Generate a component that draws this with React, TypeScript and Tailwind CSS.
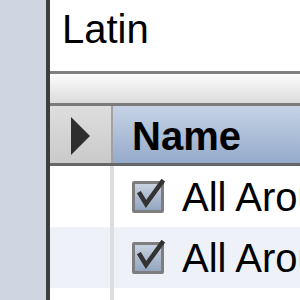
import React from "react";

type Row = { label: string; checked: boolean; stripe: boolean };

const rows: Row[] = [
  { label: "All Around", checked: true, stripe: false },
  { label: "All Around", checked: true, stripe: true },
];

function CheckBox({ checked }: { checked: boolean }) {
  return (
    <div className="relative h-[32px] w-[32px] shrink-0 rounded-[2px] border-[3px] border-[#7e7e7e] bg-gradient-to-b from-[#c8d2e1] to-[#93a5bf]">
      {checked && (
        <svg
          className="absolute left-[-3px] top-[-3px] overflow-visible"
          width="32"
          height="32"
          viewBox="0 0 32 32"
        >
          <polyline
            points="8,13 14,23 30,1"
            fill="none"
            stroke="#333"
            strokeWidth="4.5"
            strokeLinecap="square"
            strokeLinejoin="miter"
          />
        </svg>
      )}
    </div>
  );
}

export default function App() {
  return (
    <div className="flex h-[300px] w-[300px] overflow-hidden bg-white font-['Liberation_Sans',Arial,sans-serif] text-black">
      <div className="w-[46px] shrink-0 bg-[#d0d6e1]" />
      <div className="w-[4px] shrink-0 bg-[#3e3e3e]" />
      <div className="flex min-w-0 flex-1 flex-col">
        <div className="h-[71px] shrink-0 whitespace-nowrap pl-[12px] pt-[9px] text-[40px] leading-10">
          Latin
        </div>
        <div className="h-[3px] shrink-0 bg-[#808080]" />
        <div className="h-[29px] shrink-0 bg-gradient-to-b from-[#fcfcfc] to-[#dcdcdc]" />
        <div className="h-[3px] shrink-0 bg-[#7b7b7b]" />
        <div className="flex h-[57px] shrink-0">
          <div className="w-[61px] shrink-0 bg-gradient-to-b from-[#dedede] to-[#cacaca] pl-[21px] pt-[11px]">
            <svg width="19" height="38" viewBox="0 0 19 38">
              <polygon points="0,0 19,19 0,38" fill="#2e2e2e" />
            </svg>
          </div>
          <div className="w-[2px] shrink-0 bg-[#a2a2a2]" />
          <div className="flex-1 whitespace-nowrap bg-gradient-to-b from-[#c6d3e5] to-[#95aacb] pl-[19px] pt-[10px] text-[40px] font-bold leading-10">
            Name
          </div>
        </div>
        <div className="h-[3px] shrink-0 bg-[#666]" />
        {rows.map((row, i) => (
          <div
            key={i}
            className={`flex h-[61px] shrink-0 ${row.stripe ? "bg-[#eef2f8]" : "bg-white"}`}
          >
            <div className="w-[60px] shrink-0" />
            <div className="w-[4px] shrink-0 bg-[#dddddd]" />
            <div className="flex flex-1 items-center gap-[18px] whitespace-nowrap pl-[18px] text-[40px] leading-10">
              <CheckBox checked={row.checked} />
              <span>{row.label}</span>
            </div>
          </div>
        ))}
        <div className="flex flex-1">
          <div className="w-[60px] shrink-0" />
          <div className="w-[4px] shrink-0 bg-[#dddddd]" />
        </div>
      </div>
    </div>
  );
}
